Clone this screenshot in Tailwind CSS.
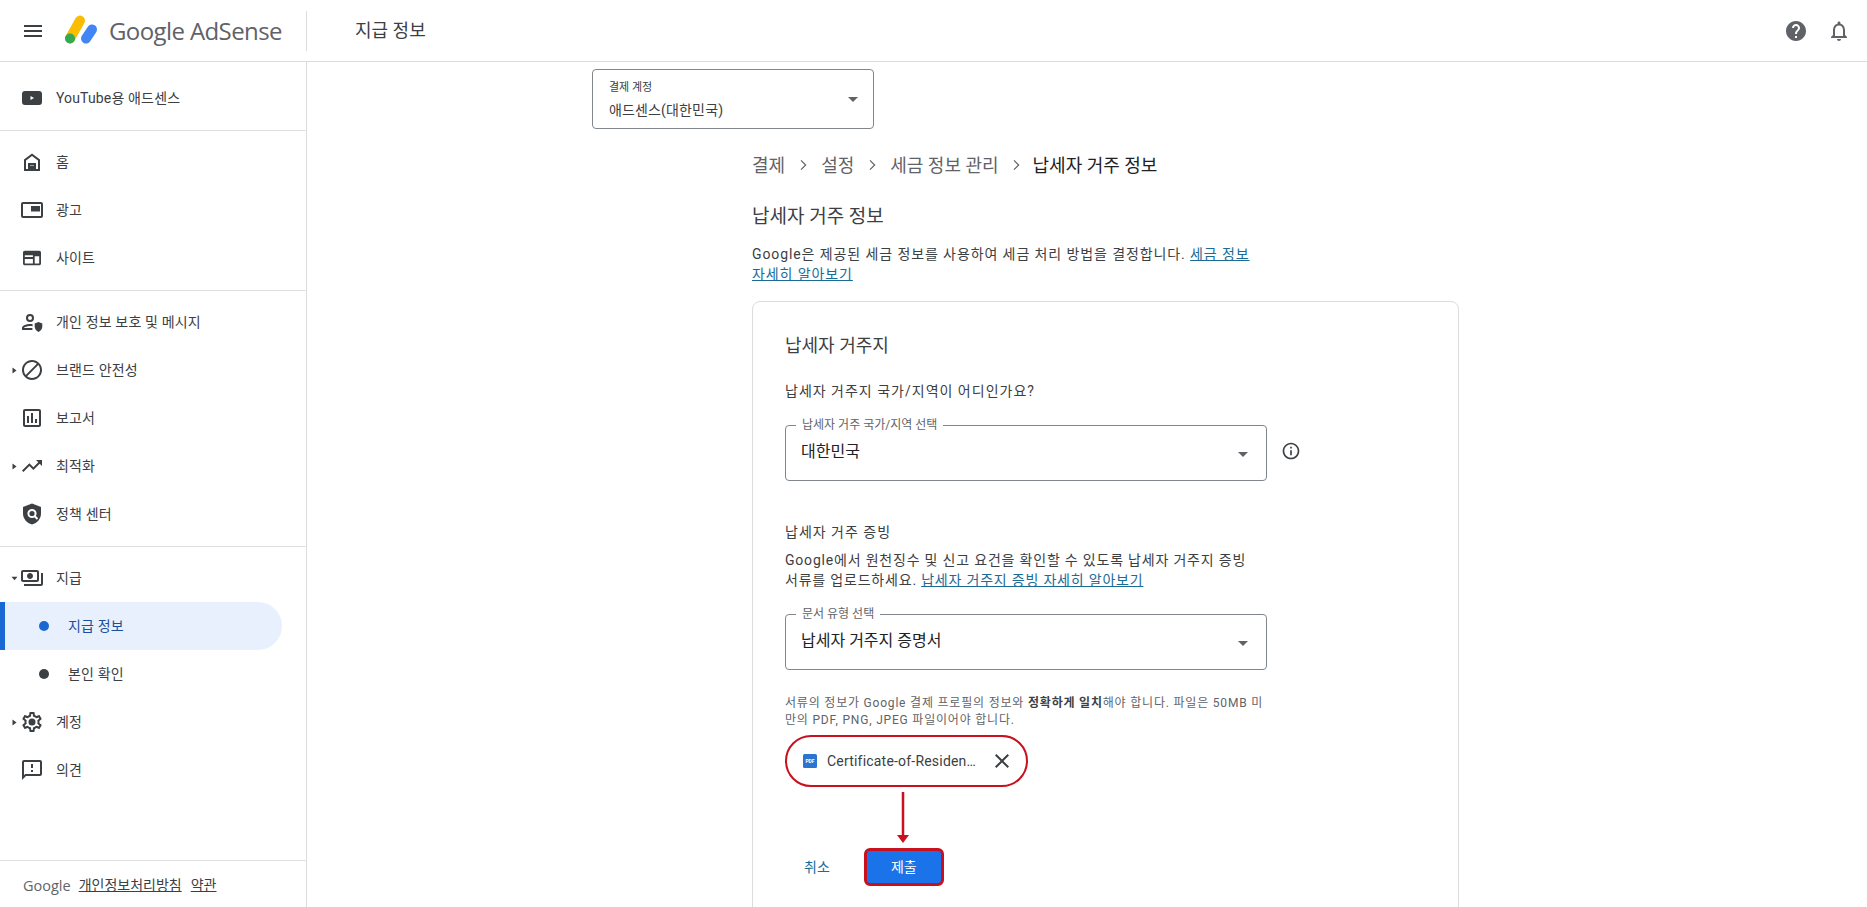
<!DOCTYPE html>
<html lang="ko">
<head>
  <meta charset="UTF-8">
  <title>Google AdSense</title>
  <script src="https://cdn.jsdelivr.net/npm/@tailwindcss/browser@4"></script>
</head>
<body class="h-screen overflow-hidden flex flex-col bg-white text-[#3c4043] font-['Roboto','Noto_Sans_CJK_KR',sans-serif]">
  <!-- Header -->
  <header class="h-[62px] shrink-0 border-b border-[#dadce0] flex items-center">
    <div class="w-[307px] h-[40px] shrink-0 border-r border-[#dadce0] flex items-center pl-[21px]">
      <svg class="w-[24px] h-[24px]" viewBox="0 0 24 24" fill="#3c4043"><path d="M3 18h18v-2H3v2zm0-5h18v-2H3v2zm0-7v2h18V6H3z"/></svg>
      <svg class="w-[40px] h-[34px] ml-[18px]" viewBox="0 0 40 34">
        <path d="M17 6.500L7 24.500" stroke="#fbbc04" stroke-width="10" stroke-linecap="round"/>
        <path d="M29 15.500L23 24.500" stroke="#4285f4" stroke-width="10" stroke-linecap="round"/>
        <circle cx="7" cy="24.500" r="5" fill="#34a853"/>
      </svg>
      <span class="ml-[6px] text-[24px] text-[#5f6368] font-['Open_Sans','Roboto',sans-serif] tracking-[-0.6px] whitespace-nowrap">Google AdSense</span>
    </div>
    <h1 class="ml-[48px] text-[18px] text-[#3c4043]">지급 정보</h1>
    <div class="ml-auto flex items-center gap-[19px] pr-[16px]">
      <svg class="w-[24px] h-[24px]" viewBox="0 0 24 24" fill="#5f6368"><path d="M12 2C6.480 2 2 6.480 2 12s4.480 10 10 10 10-4.480 10-10S17.520 2 12 2zm1 17h-2v-2h2v2zm2.070-7.750l-.9.920C13.450 12.900 13 13.500 13 15h-2v-.5c0-1.100.45-2.100 1.170-2.830l1.240-1.260c.37-.36.59-.86.59-1.410 0-1.100-.9-2-2-2s-2 .9-2 2H8c0-2.210 1.790-4 4-4s4 1.790 4 4c0 .88-.36 1.680-.93 2.250z"/></svg>
      <svg class="w-[24px] h-[24px]" viewBox="0 0 24 24" fill="#5f6368"><path d="M12 22c1.100 0 2-.9 2-2h-4c0 1.100.9 2 2 2zm6-6v-5c0-3.070-1.630-5.640-4.500-6.320V4c0-.83-.67-1.500-1.500-1.500s-1.500.67-1.500 1.500v.68C7.640 5.360 6 7.920 6 11v5l-2 2v1h16v-1l-2-2zm-2 1H8v-6c0-2.480 1.510-4.500 4-4.500s4 2.020 4 4.500v6z"/></svg>
    </div>
  </header>

  <div class="flex-1 flex min-h-0">
    <!-- Sidebar -->
    <aside class="w-[307px] shrink-0 border-r border-[#dadce0] flex flex-col text-[14px] tracking-[0.15px] text-[#3c4043]">
      <div class="pt-[12px] pb-[8px] border-b border-[#e0e0e0]">
        <a class="h-[48px] flex items-center pl-[20px] gap-[12px]">
          <svg class="w-[24px] h-[24px]" viewBox="0 0 24 24"><rect x="2" y="5" width="20" height="14" rx="3" fill="#3c4043"/><path d="M10.500 10v4l3.500-2z" fill="#fff"/></svg>
          <span>YouTube용 애드센스</span>
        </a>
      </div>
      <div class="pt-[7px] pb-[8px] border-b border-[#e0e0e0]">
        <a class="h-[48px] flex items-center pl-[20px] gap-[12px]">
          <svg class="w-[24px] h-[24px]" viewBox="0 0 24 24" fill="#3c4043"><path d="M12 3.500L4 9.500V21h6v-6h4v6h6V9.500zM18 19h-2v-6H8v6H6v-8.500l6-4.500 6 4.500z"/><path d="M10 15.500h4V21h-4z"/></svg>
          <span>홈</span>
        </a>
        <a class="h-[48px] flex items-center pl-[20px] gap-[12px]">
          <svg class="w-[24px] h-[24px]" viewBox="0 0 24 24" fill="#3c4043"><path d="M21 4H3c-1.100 0-2 .9-2 2v12c0 1.100.9 2 2 2h18c1.100 0 2-.9 2-2V6c0-1.100-.9-2-2-2zm0 14H3V6h18v12zM11 8h9v5.500h-9z"/></svg>
          <span>광고</span>
        </a>
        <a class="h-[48px] flex items-center pl-[20px] gap-[12px]">
          <svg class="w-[24px] h-[24px]" viewBox="0 0 24 24" fill="#3c4043"><path d="M20 4H4c-1.100 0-2 .9-2 2v12c0 1.100.9 2 2 2h16c1.100 0 2-.9 2-2V6c0-1.100-.9-2-2-2zM4 13h9v5H4v-5zm11 5v-8h5v8h-5zM4 11V9h9v2H4z" transform="translate(1.200 1.200) scale(.9)"/></svg>
          <span>사이트</span>
        </a>
      </div>
      <div class="pt-[7px] pb-[8px] border-b border-[#e0e0e0]">
        <a class="h-[48px] flex items-center pl-[20px] gap-[12px]">
          <svg class="w-[24px] h-[24px]" viewBox="0 0 24 24" fill="#3c4043"><path d="M10 4a4 4 0 1 1 0 8 4 4 0 0 1 0-8zm0 2a2 2 0 1 0 0 4 2 2 0 0 0 0-4zM2 20v-2c0-2.700 5-4 8-4 .8 0 1.700.1 2.600.3v2c-.9-.2-1.800-.3-2.600-.3-2.700 0-6 1.100-6 2v.1h8.400V20z"/><path d="M18.500 12l3.800 1.500v3c0 2.600-1.600 4.500-3.800 5.500-2.200-1-3.800-2.900-3.800-5.500v-3z"/></svg>
          <span>개인 정보 보호 및 메시지</span>
        </a>
        <a class="h-[48px] flex items-center pl-[9px]">
          <svg class="w-[11px] h-[11px]" viewBox="0 0 11 11" fill="#3c4043"><path d="M3.500 2.500l4 3-4 3z"/></svg>
          <svg class="w-[24px] h-[24px] mr-[12px]" viewBox="0 0 24 24" fill="#3c4043"><path d="M12 2C6.480 2 2 6.480 2 12s4.480 10 10 10 10-4.480 10-10S17.520 2 12 2zM4 12c0-4.420 3.580-8 8-8 1.850 0 3.550.63 4.900 1.690L5.690 16.900C4.630 15.550 4 13.850 4 12zm8 8c-1.850 0-3.550-.63-4.900-1.690L18.310 7.100C19.370 8.450 20 10.150 20 12c0 4.420-3.580 8-8 8z"/></svg>
          <span>브랜드 안전성</span>
        </a>
        <a class="h-[48px] flex items-center pl-[20px] gap-[12px]">
          <svg class="w-[24px] h-[24px]" viewBox="0 0 24 24" fill="#3c4043"><path d="M19 3H5c-1.100 0-2 .9-2 2v14c0 1.100.9 2 2 2h14c1.100 0 2-.9 2-2V5c0-1.100-.9-2-2-2zm0 16H5V5h14v14zM7 10h2v7H7zm4-3h2v10h-2zm4 6h2v4h-2z"/></svg>
          <span>보고서</span>
        </a>
        <a class="h-[48px] flex items-center pl-[9px]">
          <svg class="w-[11px] h-[11px]" viewBox="0 0 11 11" fill="#3c4043"><path d="M3.500 2.500l4 3-4 3z"/></svg>
          <svg class="w-[24px] h-[24px] mr-[12px]" viewBox="0 0 24 24" fill="#3c4043"><path d="M16 6l2.290 2.290-4.880 4.880-4-4L2 16.590 3.410 18l6-6 4 4 6.300-6.290L22 12V6z"/></svg>
          <span>최적화</span>
        </a>
        <a class="h-[48px] flex items-center pl-[20px] gap-[12px]">
          <svg class="w-[24px] h-[24px]" viewBox="0 0 24 24"><path d="M12 1.500l9 3.500v6.500c0 5.200-3.700 9.500-9 11-5.300-1.500-9-5.800-9-11V5z" fill="#3c4043"/><circle cx="12" cy="11.500" r="3.600" fill="none" stroke="#fff" stroke-width="2"/><path d="M14.500 14l3 3" stroke="#fff" stroke-width="2"/></svg>
          <span>정책 센터</span>
        </a>
      </div>
      <div class="pt-[7px]">
        <a class="h-[48px] flex items-center pl-[9px]">
          <svg class="w-[11px] h-[11px]" viewBox="0 0 11 11" fill="#3c4043"><path d="M2.500 3.800l3 3.500 3-3.500z"/></svg>
          <svg class="w-[24px] h-[24px] mr-[12px]" viewBox="0 0 24 24" fill="#3c4043"><path d="M19 14V6c0-1.100-.9-2-2-2H3c-1.100 0-2 .9-2 2v8c0 1.100.9 2 2 2h14c1.100 0 2-.9 2-2zm-2 0H3V6h14v8zm-7-7c-1.660 0-3 1.340-3 3s1.340 3 3 3 3-1.340 3-3-1.340-3-3-3zm13 0v11c0 1.100-.9 2-2 2H4v-2h17V7h2z"/></svg>
          <span>지급</span>
        </a>
        <a class="h-[48px] w-[282px] flex items-center pl-[34px] border-l-[5px] border-[#1967d2] bg-[#e8f0fe] rounded-r-[24px] text-[#1a4f9c]">
          <span class="w-[10px] h-[10px] rounded-full bg-[#1967d2]"></span>
          <span class="ml-[19px]">지급 정보</span>
        </a>
        <a class="h-[48px] flex items-center pl-[34px] ml-[5px]">
          <span class="w-[10px] h-[10px] rounded-full bg-[#3c4043]"></span>
          <span class="ml-[19px]">본인 확인</span>
        </a>
        <a class="h-[48px] flex items-center pl-[9px]">
          <svg class="w-[11px] h-[11px]" viewBox="0 0 11 11" fill="#3c4043"><path d="M3.500 2.500l4 3-4 3z"/></svg>
          <svg class="w-[24px] h-[24px] mr-[12px]" viewBox="0 0 24 24" fill="#3c4043"><path d="M19.430 12.980c.04-.32.07-.64.07-.98 0-.34-.03-.66-.07-.98l2.110-1.650c.19-.15.24-.42.12-.64l-2-3.460c-.09-.16-.26-.25-.44-.25-.06 0-.12.01-.17.03l-2.490 1c-.52-.4-1.080-.73-1.690-.98l-.38-2.650C14.460 2.180 14.250 2 14 2h-4c-.25 0-.46.18-.49.42l-.38 2.650c-.61.25-1.170.59-1.690.98l-2.490-1c-.06-.02-.12-.03-.18-.03-.17 0-.34.09-.43.25l-2 3.460c-.13.22-.07.49.12.64l2.110 1.650c-.04.32-.07.65-.07.98 0 .33.03.66.07.98l-2.110 1.650c-.19.15-.24.42-.12.64l2 3.460c.09.16.26.25.44.25.06 0 .12-.01.17-.03l2.490-1c.52.4 1.080.73 1.690.98l.38 2.650c.03.24.24.42.49.42h4c.25 0 .46-.18.49-.42l.38-2.650c.61-.25 1.170-.59 1.690-.98l2.490 1c.06.02.12.03.18.03.17 0 .34-.09.43-.25l2-3.460c.12-.22.07-.49-.12-.64l-2.110-1.650zm-1.980-1.710c.04.31.05.52.05.73 0 .21-.02.43-.05.73l-.14 1.130.89.7 1.080.84-.7 1.210-1.270-.51-1.040-.42-.9.68c-.43.32-.84.56-1.250.73l-1.060.43-.16 1.130-.2 1.350h-1.400l-.19-1.350-.16-1.130-1.060-.43c-.43-.18-.83-.41-1.230-.71l-.91-.7-1.060.43-1.270.51-.7-1.210 1.080-.84.89-.7-.14-1.130c-.03-.31-.05-.54-.05-.74s.02-.43.05-.73l.14-1.130-.89-.7-1.080-.84.7-1.210 1.270.51 1.040.42.9-.68c.43-.32.84-.56 1.250-.73l1.060-.43.16-1.130.2-1.350h1.390l.19 1.350.16 1.130 1.060.43c.43.18.83.41 1.230.71l.91.7 1.060-.43 1.270-.51.7 1.210-1.070.85-.89.7.14 1.130z"/><circle cx="12" cy="12" r="3.500"/></svg>
          <span>계정</span>
        </a>
        <a class="h-[48px] flex items-center pl-[20px] gap-[12px]">
          <svg class="w-[24px] h-[24px]" viewBox="0 0 24 24" fill="#3c4043"><path d="M20 2H4c-1.100 0-1.990.9-1.990 2L2 22l4-4h14c1.100 0 2-.9 2-2V4c0-1.100-.9-2-2-2zm0 14H5.170L4 17.170V4h16v12zm-9-4h2v2h-2zm0-6h2v4h-2z"/></svg>
          <span>의견</span>
        </a>
      </div>
      <div class="flex-1"></div>
      <footer class="h-[47px] border-t border-[#e0e0e0] flex items-center pl-[23px] pt-[3px] tracking-normal">
        <span class="text-[#5f6368] text-[14.500px] font-['Open_Sans','Roboto',sans-serif]">Google</span>
        <a class="ml-[8px] underline">개인정보처리방침</a>
        <a class="ml-[9px] underline">약관</a>
      </footer>
    </aside>

    <!-- Main -->
    <main class="flex-1 min-w-0 pl-[285px] overflow-hidden">
      <div class="relative mt-[7px] w-[282px] h-[60px] border border-[#80868b] rounded-[4px] pl-[16px]">
        <div class="absolute left-[16px] top-[11px] text-[11px] leading-[14px] text-[#3c4043]">결제 계정</div>
        <div class="absolute left-[16px] top-[30px] text-[14px] leading-[20px] tracking-[0.15px] text-[#3c4043]">애드센스(대한민국)</div>
        <span class="absolute right-[15px] top-[27px] w-0 h-0 border-x-[5px] border-x-transparent border-t-[5px] border-t-[#5f6368]"></span>
      </div>

      <div class="ml-[160px] w-[707px]">
        <nav class="mt-[25px] h-[24px] flex items-center text-[18px] leading-[24px] text-[#5f6368] whitespace-nowrap">
          <span>결제</span>
          <svg class="w-[16px] h-[16px] mx-[10px] mt-[-2px]" viewBox="0 0 24 24" fill="none" stroke="#5f6368" stroke-width="1.800"><path d="M9 5l7 7-7 7"/></svg>
          <span>설정</span>
          <svg class="w-[16px] h-[16px] mx-[10px] mt-[-2px]" viewBox="0 0 24 24" fill="none" stroke="#5f6368" stroke-width="1.800"><path d="M9 5l7 7-7 7"/></svg>
          <span>세금 정보 관리</span>
          <svg class="w-[16px] h-[16px] mx-[9px] mt-[-2px]" viewBox="0 0 24 24" fill="none" stroke="#5f6368" stroke-width="1.800"><path d="M9 5l7 7-7 7"/></svg>
          <span class="text-[#202124]">납세자 거주 정보</span>
        </nav>

        <h2 class="mt-[25px] h-[28px] text-[19px] leading-[28px] text-[#3c4043]">납세자 거주 정보</h2>
        <p class="mt-[13px] w-[505px] text-[14px] leading-[20px] tracking-[0.9px] text-[#3c4043]">Google은 제공된 세금 정보를 사용하여 세금 처리 방법을 결정합니다. <a class="text-[#1a6b96] underline">세금 정보 자세히 알아보기</a></p>

        <section class="mt-[17px] border border-[#dadce0] rounded-[8px] pl-[32px] pt-[32px] pb-[40px]">
          <h3 class="h-[24px] text-[18px] leading-[24px] text-[#3c4043]">납세자 거주지</h3>
          <p class="mt-[23px] h-[20px] text-[14px] leading-[20px] tracking-[1px]">납세자 거주지 국가/지역이 어디인가요?</p>

          <div class="mt-[24px] flex items-center">
            <div class="relative w-[482px] h-[56px] border border-[#80868b] rounded-[4px]">
              <span class="absolute left-[10px] top-[-8px] px-[6px] bg-white text-[12px] leading-[14px] text-[#5f6368]">납세자 거주 국가/지역 선택</span>
              <span class="absolute left-[15px] top-[15px] text-[16px] leading-[22px] text-[#202124]">대한민국</span>
              <span class="absolute right-[18px] top-[26px] w-0 h-0 border-x-[5px] border-x-transparent border-t-[5px] border-t-[#5f6368]"></span>
            </div>
            <svg class="w-[20px] h-[20px] ml-[14px] mt-[-4px]" viewBox="0 0 24 24" fill="#3c4043"><path d="M11 7h2v2h-2zm0 4h2v6h-2zm1-9C6.480 2 2 6.480 2 12s4.480 10 10 10 10-4.480 10-10S17.520 2 12 2zm0 18c-4.410 0-8-3.590-8-8s3.590-8 8-8 8 3.590 8 8-3.590 8-8 8z"/></svg>
          </div>

          <h4 class="mt-[41px] h-[20px] text-[14px] leading-[20px] tracking-[1px] font-normal">납세자 거주 증빙</h4>
          <p class="mt-[9px] w-[470px] text-[14px] leading-[19.500px] tracking-[0.8px]">Google에서 원천징수 및 신고 요건을 확인할 수 있도록 납세자 거주지 증빙 서류를 업로드하세요. <a class="text-[#1a6b96] underline">납세자 거주지 증빙 자세히 알아보기</a></p>

          <div class="relative mt-[24px] w-[482px] h-[56px] border border-[#80868b] rounded-[4px]">
            <span class="absolute left-[10px] top-[-8px] px-[6px] bg-white text-[12px] leading-[14px] text-[#5f6368]">문서 유형 선택</span>
            <span class="absolute left-[15px] top-[15px] text-[16px] leading-[22px] text-[#202124]">납세자 거주지 증명서</span>
            <span class="absolute right-[18px] top-[26px] w-0 h-0 border-x-[5px] border-x-transparent border-t-[5px] border-t-[#5f6368]"></span>
          </div>

          <p class="mt-[25px] w-[482px] text-[12px] leading-[17px] tracking-[0.8px] text-[#5f6368]">서류의 정보가 Google 결제 프로필의 정보와 <b class="font-bold text-[#3c4043]">정확하게 일치</b>해야 합니다. 파일은 50MB 미만의 PDF, PNG, JPEG 파일이어야 합니다.</p>

          <div class="relative">
            <div class="mt-[6px] w-[243px] h-[52px] border-[2.500px] border-[#c8101f] rounded-[26px] flex items-center pl-[16px]">
              <span class="w-[14px] h-[14px] shrink-0 rounded-[1.500px] bg-[#2b74d0] flex items-center justify-center text-[5px] leading-none font-bold text-white">PDF</span>
              <span class="ml-[10px] w-[151px] truncate text-[14px] tracking-[0.2px] text-[#3c4043]">Certificate-of-Residence.pdf</span>
              <svg class="w-[24px] h-[24px] ml-[12px] shrink-0" viewBox="0 0 24 24" fill="#3c4043"><path d="M19 6.410L17.590 5 12 10.590 6.410 5 5 6.410 10.590 12 5 17.590 6.410 19 12 13.410 17.590 19 19 17.590 13.410 12z"/></svg>
            </div>
            <!-- annotation arrow -->
            <svg class="absolute left-[110px] top-[57px] w-[16px] h-[51px]" viewBox="0 0 16 51"><path d="M8 0v44" stroke="#c8101f" stroke-width="2.500"/><path d="M2 43h12l-6 8z" fill="#c8101f"/></svg>
          </div>

          <div class="mt-[61px] flex items-center">
            <a class="ml-[19px] text-[14px] text-[#1a6b96]">취소</a>
            <button class="ml-[34px] w-[80px] h-[38px] bg-[#1a73e8] border-[3px] border-[#c8101f] rounded-[6px] text-[14px] text-white">제출</button>
          </div>
        </section>
      </div>
    </main>
  </div>
</body>
</html>
